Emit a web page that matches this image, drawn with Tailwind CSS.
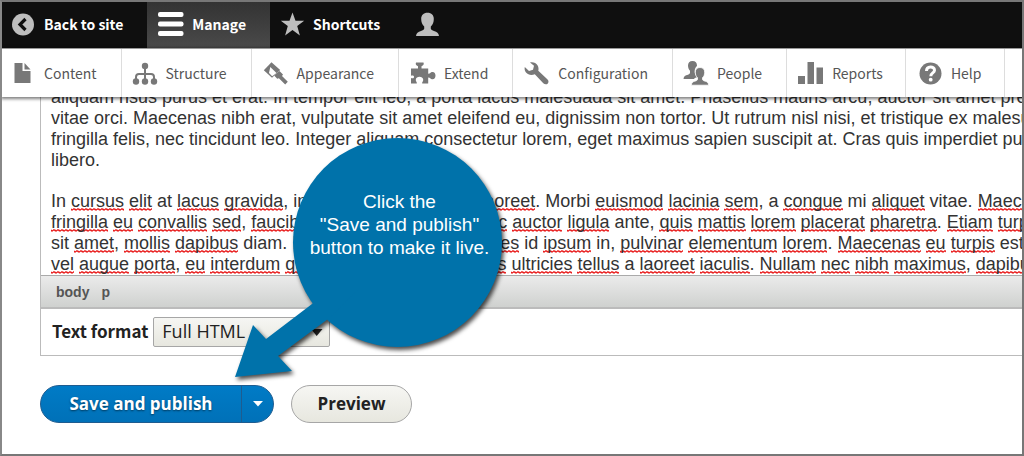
<!DOCTYPE html>
<html lang="en">
<head>
  <meta charset="UTF-8">
  <meta name="viewport" content="width=device-width, initial-scale=1.0">
  <title>Edit page | Drupal</title>
  <script src="https://cdn.jsdelivr.net/npm/@tailwindcss/browser@4"></script>
  <style>
    body { font-family: 'Noto Sans CJK SC', 'Open Sans', sans-serif; }
    /* spell checker squiggle */
    .editor u {
      text-decoration: none;
      background: url("data:image/svg+xml,%3Csvg xmlns='http://www.w3.org/2000/svg' width='4' height='3'%3E%3Cpath d='M-1 0L1 2.200L3 .6L5 2.600' fill='none' stroke='%23e81c1c' stroke-width='1.100'/%3E%3C/svg%3E") repeat-x left bottom;
    }
  </style>
</head>
<body class="bg-white text-[#222]">
  <div class="relative min-h-screen overflow-hidden border-2 border-[#777] border-l-[#888]">
    <!-- Toolbar -->
    <nav class="flex h-[46px] bg-[#0f0f0f] text-sm font-bold text-white" aria-label="Toolbar">
      <a href="#" class="flex items-center gap-2 pl-[9px] pr-6 pb-[2px]">
        <svg class="w-[25px] h-[25px]" viewBox="0 0 25 25"><circle cx="12" cy="12.500" r="11" fill="#bebebe"/><path d="M14.500 7L9 12.500l5.500 5.500" fill="none" stroke="#0f0f0f" stroke-width="3.200"/></svg>
        Back to site
      </a>
      <a href="#" class="flex items-center gap-2 bg-linear-to-b from-[#333] to-[#4a4a4a] pl-[11px] pr-6 pb-[2px]">
        <svg class="w-[26px] h-[25px]" viewBox="0 0 26 25" fill="#fff"><rect y="0" width="25.500" height="5" rx="2"/><rect y="9.500" width="25.500" height="5" rx="2"/><rect y="19" width="25.500" height="5" rx="2"/></svg>
        Manage
      </a>
      <a href="#" class="flex items-center gap-2 pl-[10px] pr-6 pb-[2px]">
        <svg class="w-[25px] h-[25px]" viewBox="0 0 25 25" fill="#bebebe"><path d="M12.500 .5l3 8.200h8.700l-7 5.300 2.700 9.500-7.400-5.500-7.400 5.500L7.800 14l-7-5.300h8.700z"/></svg>
        Shortcuts
      </a>
      <a href="#" class="flex items-center px-[11px] pb-[2px]" aria-label="Account">
        <svg class="w-[25px] h-[25px]" viewBox="0 0 25 25" fill="#bebebe"><path d="M12.500 .8c-4 0-6.300 2.500-6.300 6.200 0 3.300 1 5.800 3 7.500v2.300c-.4 1.200-1.500 1.600-3.200 2.100-3 .9-4.600 2-5 5.100h23c-.4-3.100-2-4.200-5-5.100-1.700-.5-2.800-.9-3.200-2.100v-2.300c2-1.700 3-4.200 3-7.500 0-3.700-2.300-6.200-6.300-6.200z"/></svg>
      </a>
    </nav>

    <!-- Administration tray -->
    <nav class="relative flex h-[49px] border-t border-[#999] bg-white text-sm text-[#565656] shadow-[0_1px_3px_1px_rgba(0,0,0,0.5)]" aria-label="Administration">
      <a href="#" class="flex items-center gap-2 border-r border-[#ddd] pl-[9px] pr-6">
        <svg class="w-[25px] h-[25px]" viewBox="0 0 25 25" fill="#787878"><path d="M3.500 2h8v8h8v12h-16z"/><path d="M13.500 2l6 6.500h-6z"/></svg>
        Content
      </a>
      <a href="#" class="flex items-center gap-2 border-r border-[#ddd] pl-[10px] pr-6">
        <svg class="w-[26px] h-[25px]" viewBox="0 0 26 25" fill="#787878"><circle cx="13" cy="5" r="3.200"/><circle cx="4" cy="20.500" r="3.200"/><circle cx="13" cy="20.500" r="3.200"/><circle cx="22" cy="20.500" r="3.200"/><path d="M13 5v15M4 20v-4c0-2 1-3 3-3h12c2 0 3 1 3 3v4" fill="none" stroke="#787878" stroke-width="2"/></svg>
        Structure
      </a>
      <a href="#" class="flex items-center gap-2 border-r border-[#ddd] pl-[11px] pr-6">
        <svg class="w-[26px] h-[25px]" viewBox="0 0 26 25"><path d="M8.500 1.200L.8 9.200l8.200 7.600 8.200-7.800z" fill="#787878"/><path d="M7.300 6l6.200 6-4.300 3.200L6 12z" fill="#fff"/><path d="M14.500 11.500l2-1.500 3.500 3.500-1 1.500 5.800 5.700-2.600 2.700-6.300-6.200-1.700.6-3-3.300z" fill="#787878"/></svg>
        Appearance
      </a>
      <a href="#" class="flex items-center gap-2 border-r border-[#ddd] pl-[11px] pr-6">
        <svg class="w-[26px] h-[25px]" viewBox="0 0 26 25" fill="#787878"><path d="M1 7.500h7V5.300C6 4.500 5.300 3.300 6 1.500h7.500c.7 1.800 0 3-2 3.800v2.200h6.700v5c1 1.300 2.300-1.300 3.800-1.500 2.300-.3 3.500 1.300 3.500 3.500s-1.200 4-3.500 3.700c-1.500-.2-2.800-2.500-3.800-1.500v5.800h-6c-.5-1.300 1.300-2 1-4-.3-1.800-1.700-2.700-3.700-2.700s-3.400.9-3.700 2.700c-.3 2 1.500 2.700 1 4H1V17c1 .5 2.500.7 3-.8.4-1.500-1.500-2.200-3-1.500z"/></svg>
        Extend
      </a>
      <a href="#" class="flex items-center gap-2 border-r border-[#ddd] pl-[11px] pr-6">
        <svg class="w-[26px] h-[25px]" viewBox="0 0 26 25" fill="#787878"><path d="M6 1.500c3-.8 6 .3 7.500 2.800 1 1.700 1.300 3.500.8 5.500l9 8.400c1.500 1.500 1.500 3 .5 4.200s-3 1.300-4.500-.2l-8.500-9C7.500 14.700 4.200 14 2 11.500.8 10 .3 8 .8 6l4.200 4 4-1.200 1-4z"/></svg>
        Configuration
      </a>
      <a href="#" class="flex items-center gap-2 border-r border-[#ddd] pl-[10px] pr-6">
        <svg class="w-[26px] h-[26px]" viewBox="0 0 26 26" fill="#787878"><path d="M9.500 1C6.500 1 5 2.800 5 5.500c0 2.300.8 4 2 5.200v2.300c-.5 1.200-1.500 1.500-3 2-2 .7-3.300 1.500-3.500 4H11c.7-1 2-1.500 3.200-2-2.700-2.500-3.400-7-1.200-10 .3-.4.600-.7 1-1C14 2.800 12.500 1 9.500 1z"/><path d="M17 7.500c-3 0-4.700 1.800-4.700 4.700 0 2.500.8 4.300 2.200 5.500v1.800c-.4 1-1.300 1.300-2.800 1.700-2.200.6-3.200 1.800-3.400 4h17.400c-.2-2.200-1.200-3.400-3.400-4-1.500-.4-2.400-.7-2.800-1.700v-1.800c1.400-1.200 2.200-3 2.200-5.500 0-2.900-1.700-4.700-4.700-4.700z" stroke="#fff" stroke-width=".8"/></svg>
        People
      </a>
      <a href="#" class="flex items-center gap-2 border-r border-[#ddd] pl-[11px] pr-[22px]">
        <svg class="w-[26px] h-[25px]" viewBox="0 0 26 25" fill="#787878"><rect x="0" y="15" width="7" height="8"/><rect x="9.500" y="1" width="6.500" height="22"/><rect x="18.500" y="6.500" width="6.500" height="16.500"/></svg>
        Reports
      </a>
      <a href="#" class="flex items-center gap-2 border-r border-[#ddd] pl-3 pr-[22px]">
        <svg class="w-[25px] h-[25px]" viewBox="0 0 25 25"><circle cx="12.500" cy="12.500" r="11" fill="#787878"/><path d="M8.500 10c0-5.500 8-5.200 8-.8 0 2.800-3.700 2.600-3.700 6" fill="none" stroke="#fff" stroke-width="3"/><circle cx="12.700" cy="18.700" r="1.900" fill="#fff"/></svg>
        Help
      </a>
    </nav>

    <main class="pl-[38px] pb-7">
      <div class="border-l border-b border-[#bbb]">
        <!-- Editor content, scrolled under the tray -->
        <div class="editor overflow-hidden whitespace-nowrap pl-[10px] font-['Liberation_Sans',Arial,sans-serif] text-lg leading-[21px] text-[#333]" role="textbox" aria-multiline="true" aria-label="Body">
          <p class="-mt-[10px] mb-5">
            aliquam risus purus et erat. In tempor elit leo, a porta lacus malesuada sit amet. Phasellus mauris arcu, auctor sit amet pretium<br>
            vitae orci. Maecenas nibh erat, vulputate sit amet eleifend eu, dignissim non tortor. Ut rutrum nisl nisi, et tristique ex malesuada<br>
            fringilla felis, nec tincidunt leo. Integer aliquam consectetur lorem, eget maximus sapien suscipit at. Cras quis imperdiet purus<br>
            libero.
          </p>
          <p>
            In <u>cursus</u> <u>elit</u> at <u>lacus</u> <u>gravida</u>, in tincidunt tristique vel <u>laoreet</u>. Morbi <u>euismod</u> <u>lacinia</u> <u>sem</u>, a <u>congue</u> mi <u>aliquet</u> vitae. <u>Maecenas</u><br>
            <u>fringilla</u> <u>eu</u> <u>convallis</u> <u>sed</u>, <u>faucibus</u> et lobortis a leo. <u>Donec</u> <u>auctor</u> <u>ligula</u> ante, <u>quis</u> <u>mattis</u> <u>lorem</u> <u>placerat</u> <u>pharetra</u>. <u>Etiam</u> <u>turpis</u><br>
            sit <u>amet</u>, <u>mollis</u> <u>dapibus</u> diam. Integer eget suscipit <u>ultricies</u> id <u>ipsum</u> in, <u>pulvinar</u> <u>elementum</u> <u>lorem</u>. <u>Maecenas</u> <u>eu</u> <u>turpis</u> est<br>
            <u>vel</u> <u>augue</u> <u>porta</u>, <u>eu</u> <u>interdum</u> <u>quis</u> eget tempor. <u>Phasellus</u> <u>ultricies</u> <u>tellus</u> a <u>laoreet</u> <u>iaculis</u>. <u>Nullam</u> <u>nec</u> <u>nibh</u> <u>maximus</u>, <u>dapibus</u>
          </p>
        </div>
        <div class="flex h-[34px] items-center gap-3 border-t border-b-2 border-t-[#aaa] border-b-[#bbb] bg-linear-to-b from-[#ebebeb] to-[#cfd1cf] pl-[15px] font-['Liberation_Sans',Arial,sans-serif] text-sm font-bold text-[#555]">
          <a href="#">body</a>
          <a href="#">p</a>
        </div>
        <div class="flex h-[46px] items-center gap-[5px] pl-[11px]">
          <label for="format" class="pb-[2px] text-[17px] font-bold">Text format</label>
          <div class="relative">
            <select id="format" class="h-[30px] w-[177px] appearance-none rounded-xs border border-[#a6a6a6] bg-linear-to-b from-[#f6f6f3] to-[#e7e7df] pl-2 pb-[3px] font-['Open_Sans',sans-serif] text-lg leading-6">
              <option>Full HTML</option>
            </select>
            <svg class="pointer-events-none absolute right-[7px] top-3 w-3 h-2" viewBox="0 0 12 8"><path d="M0 0h11.500L5.700 7z" fill="#222"/></svg>
          </div>
        </div>
      </div>

      <div class="mt-[29px] flex gap-[17px] font-['Open_Sans',sans-serif] text-[17px] font-bold">
        <div class="flex h-[38px] overflow-hidden rounded-full border border-[#1e5c90] bg-linear-to-b from-[#007bc6] to-[#0071b8] text-white">
          <button type="button" class="w-[200px] pb-px text-center [text-shadow:0_1px_2px_rgba(0,0,0,0.5)]">Save and publish</button>
          <button type="button" class="flex w-8 items-center justify-center border-l border-[#1e5c90]" aria-label="More actions">
            <svg class="w-[10px] h-[6px]" viewBox="0 0 10 6"><path d="M0 0h10L5 5.500z" fill="#fff"/></svg>
          </button>
        </div>
        <button type="button" class="h-[38px] w-[121px] rounded-full border border-[#a6a6a6] bg-linear-to-b from-[#f6f6f3] to-[#e7e7df] pb-px">Preview</button>
      </div>
    </main>

    <!-- Callout -->
    <div class="pointer-events-none absolute left-[231px] top-[134px] h-[250px] w-[280px]">
      <svg class="absolute inset-0 h-full w-full drop-shadow-[2px_3px_2px_rgba(0,0,0,0.7)]" viewBox="0 0 280 250" fill="#0072aa">
        <circle cx="164.500" cy="106.500" r="104.500"/>
        <path d="M2 241l18-52 13 14 46-35 30-30 16 16-30 29-50 37 14 15z"/>
      </svg>
      <p class="absolute left-[61px] top-[54px] w-[211px] text-center font-['Liberation_Sans',Arial,sans-serif] text-[19px] leading-[23px] text-white">Click the<br>"Save and publish"<br>button to make it live.</p>
    </div>
  </div>
</body>
</html>
